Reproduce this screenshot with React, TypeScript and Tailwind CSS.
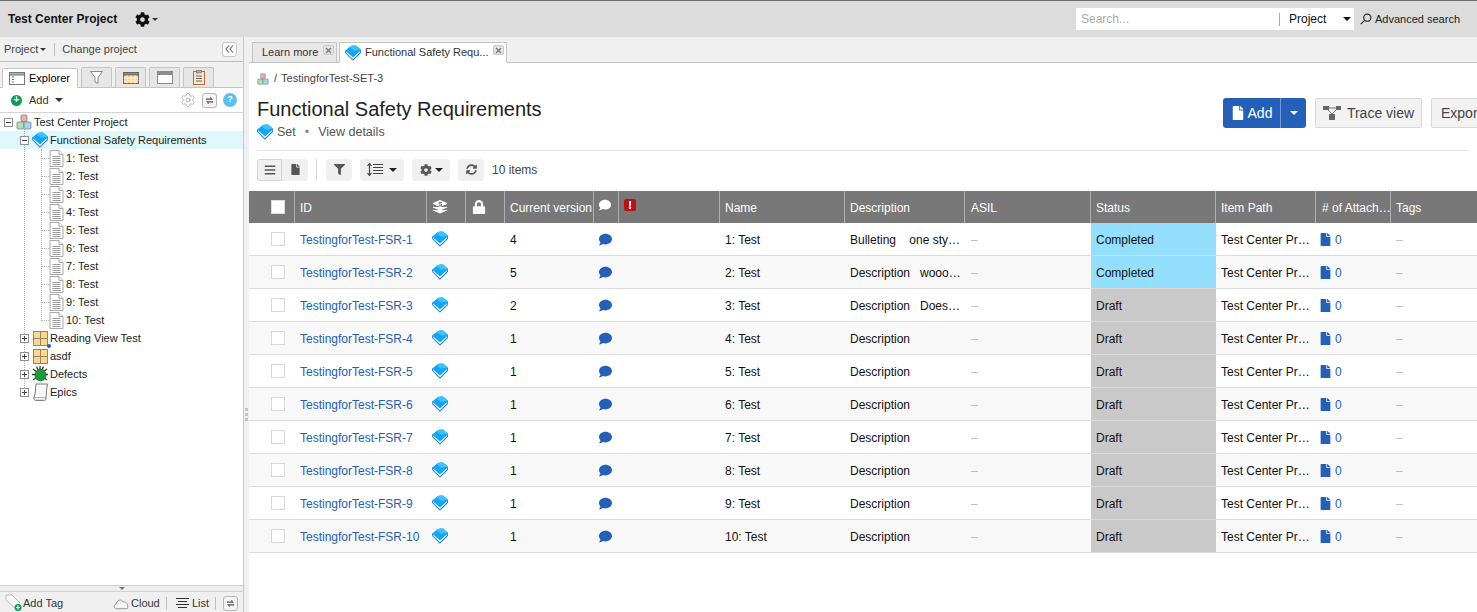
import { FaBars, FaCog, FaComment, FaExclamation, FaFile, FaFilter, FaLock, FaSyncAlt } from "react-icons/fa";
import { Settings } from "lucide-react";

const rows = [
  { id: 1, version: 4, desc: "Bulleting    one sty…", status: "Completed" },
  { id: 2, version: 5, desc: "Description   wooo…", status: "Completed" },
  { id: 3, version: 2, desc: "Description   Does…", status: "Draft" },
  { id: 4, version: 1, desc: "Description", status: "Draft" },
  { id: 5, version: 1, desc: "Description", status: "Draft" },
  { id: 6, version: 1, desc: "Description", status: "Draft" },
  { id: 7, version: 1, desc: "Description", status: "Draft" },
  { id: 8, version: 1, desc: "Description", status: "Draft" },
  { id: 9, version: 1, desc: "Description", status: "Draft" },
  { id: 10, version: 1, desc: "Description", status: "Draft" },
];

const gridCols =
  "grid grid-cols-[46px_132px_39px_39px_89px_25px_101px_125px_120px_126px_125px_100px_75px_86px]";

const Caret = ({ className = "border-t-black" }: { className?: string }) => (
  <span className={`inline-block w-0 h-0 border-x-[4px] border-x-transparent border-t-[4px] ${className}`} />
);

const Gem = ({ size = 16 }: { size?: number }) => (
  <svg width={size} height={size} viewBox="0 0 16 16" className="shrink-0">
    <path d="M0.1 5.8 V8 L8 15.8 L15.9 8 V5 L8 1 Z" fill="#1f7fe6" />
    <path d="M1.1 6.4 V7.7 L8 14.3 L14.9 7.5 V5 L8 1 Z" fill="#ffffff" />
    <path d="M0.2 5.8 L4.5 1.9 Q6 .7 8 .4 L11 .4 L15.8 4.6 V5.4 L8 12.6 Z" fill="#12a6fb" />
    <path d="M4.5 1.9 Q6 .7 8 .4 L11 .4 L15.8 4.6 L9 5.8 Z" fill="#3cc2fd" />
  </svg>
);

const ProjectIcon = ({ size = 16 }: { size?: number }) => (
  <svg width={size} height={size} viewBox="0 0 16 16" className="shrink-0">
    <rect x="5" y="1" width="6" height="6.5" rx="1" fill="#eab0a8" stroke="#8a7d78" strokeWidth="0.8" />
    <rect x="1" y="8" width="7" height="7" rx="1" fill="#b7dcbc" stroke="#74877a" strokeWidth="0.8" />
    <rect x="8" y="8" width="7" height="7" rx="1" fill="#a8d4f0" stroke="#6c8598" strokeWidth="0.8" />
  </svg>
);

const DocIcon = () => (
  <svg width="15" height="17" viewBox="0 0 15 17" className="shrink-0">
    <path d="M1 .5 H10 L14 4.5 V16.5 H1 Z" fill="#fff" stroke="#a8a8a8" />
    <path d="M10 .5 V4.5 H14" fill="#f0f0f0" stroke="#a8a8a8" />
    <path d="M3.5 6.5 H11.5 M3.5 8.5 H11.5 M3.5 10.5 H11.5 M3.5 12.5 H11.5 M3.5 14.5 H11.5" stroke="#9a9a9a" />
  </svg>
);

const FolderGrid = ({ dot }: { dot?: boolean }) => (
  <span className="relative shrink-0">
    <svg width="15" height="15" viewBox="0 0 15 15" className="block">
      <rect x=".5" y=".5" width="14" height="14" fill="#fcd98a" stroke="#94866a" />
      <path d="M7.5 .5 V14.5 M.5 7.5 H14.5" stroke="#94866a" />
    </svg>
    {dot && <span className="absolute right-[-3px] bottom-[-2px] w-[4px] h-[4px] rounded-full bg-[#2563bd]" />}
  </span>
);

const BugIcon = () => (
  <svg width="16" height="17" viewBox="0 0 16 17" className="shrink-0">
    <path
      d="M1 3 L5 6 M15 3 L11 6 M0 8.5 H4 M16 8.5 H12 M1 14 L5 11 M15 14 L11 11 M8 0 V3 M4.5 .5 L6 4 M11.5 .5 L10 4"
      stroke="#2f4a36"
      strokeWidth="1.3"
    />
    <ellipse cx="8.5" cy="9" rx="5.5" ry="6" fill="#1c9a3a" stroke="#24552f" strokeWidth=".7" />
  </svg>
);

const ScrollIcon = () => (
  <svg width="15" height="18" viewBox="0 0 15 18" className="shrink-0">
    <path d="M3 1 H14.5 C13.5 5 13.5 10 13 15 H.8 C2.5 11 2.5 5 3 1 Z" fill="#f8f8f8" stroke="#777" />
    <path d="M.8 15 C.8 16.8 1.8 17.4 3 17.4 H11.5 C12.5 17.4 13 16.5 13 15" fill="#eeeeee" stroke="#777" />
  </svg>
);

const Expander = ({ open }: { open?: boolean }) => (
  <span className="relative z-10 flex items-center justify-center w-[9px] h-[9px] border border-[#8f8f8f] bg-white shrink-0">
    <span className="absolute w-[5px] h-px bg-[#444]" />
    {!open && <span className="absolute w-px h-[5px] bg-[#444]" />}
  </span>
);

const ExpandRow = ({ label, children }: { label: string; children: React.ReactNode }) => (
  <div className="h-[18px] flex items-center pl-[20px]">
    <Expander />
    <span className="w-[3px]" />
    <span className="flex items-center justify-center w-[16px]">{children}</span>
    <span className="ml-[2px]">{label}</span>
  </div>
);

const SmallRefresh = () => (
  <span className="flex items-center justify-center w-[15px] h-[15px] shrink-0 border border-[#b5b5b5] rounded-[3px] bg-[#f4f4f4]">
    <svg width="9" height="9" viewBox="0 0 10 10">
      <path d="M1 3.5 H7.5 L6 1.5 M9 6.5 H2.5 L4 8.5" fill="none" stroke="#555" strokeWidth="1.2" />
    </svg>
  </span>
);

const Sidebar = () => (
  <aside className="w-[244px] shrink-0 h-full flex flex-col border-r border-[#c8c8c8] bg-white text-[11px] text-[#222]">
    <div className="h-[25px] bg-[#f0f0f0] border-b border-[#bfbfbf] flex items-center pl-[4px] pr-[6px] text-[#444]">
      <span>Project</span>
      <Caret className="border-t-[#333] ml-[2px] mt-[1px] !border-x-[3.5px] !border-t-[3.5px]" />
      <span className="w-px h-[13px] bg-[#bdbdbd] ml-[8px] mr-[7px]" />
      <span>Change project</span>
      <span className="ml-auto w-[15px] h-[15px] border border-[#c4c4c4] rounded-[3px] bg-white flex items-center justify-center text-[#666]">
        <svg width="9" height="8" viewBox="0 0 9 8">
          <path d="M4 .5 L1 4 L4 7.5 M8 .5 L5 4 L8 7.5" fill="none" stroke="#666" strokeWidth="1.1" />
        </svg>
      </span>
    </div>
    <div className="h-[26px] bg-[#f0f0f0] border-b border-[#c4c4c4] flex items-end pl-[2px] gap-[3px]">
      <div className="h-[20px] w-[76px] -mb-px bg-white border border-[#c4c4c4] border-b-white rounded-t-[2px] flex items-center pl-[6px] gap-[4px] text-[11px] text-black">
        <svg width="16" height="13" viewBox="0 0 16 13">
          <rect x=".5" y=".5" width="15" height="12" fill="#fff" stroke="#777" />
          <rect x=".5" y=".5" width="15" height="2.5" fill="#9fb4cc" stroke="#777" />
          <path d="M3 5 H5 M3 7.5 H5 M3 10 H5" stroke="#4a78b0" />
        </svg>
        Explorer
      </div>
      <div className="h-[20px] w-[31px] bg-[#e6e6e6] border border-[#c4c4c4] border-b-0 rounded-t-[2px] flex items-center justify-center">
        <svg width="13" height="13" viewBox="0 0 13 13">
          <path d="M.5 .5 H12.5 L8 6.5 V12.5 L5 11 V6.5 Z" fill="#fff" stroke="#8a8a8a" />
        </svg>
      </div>
      <div className="h-[20px] w-[31px] bg-[#e6e6e6] border border-[#c4c4c4] border-b-0 rounded-t-[2px] flex items-center justify-center">
        <svg width="16" height="12" viewBox="0 0 16 12">
          <rect x=".5" y=".5" width="15" height="11" fill="#fbd38a" stroke="#666" />
          <rect x=".5" y=".5" width="15" height="2.5" fill="#888" stroke="#666" />
          <path d="M.5 6 H15.5 M.5 9 H15.5 M4 3 V11.5 M8 3 V11.5 M12 3 V11.5" stroke="#fff" strokeWidth=".7" />
        </svg>
      </div>
      <div className="h-[20px] w-[31px] bg-[#e6e6e6] border border-[#c4c4c4] border-b-0 rounded-t-[2px] flex items-center justify-center">
        <svg width="16" height="13" viewBox="0 0 16 13">
          <rect x=".5" y=".5" width="15" height="12" fill="#fff" stroke="#888" />
          <rect x=".5" y=".5" width="15" height="3.5" fill="#8c8c8c" />
        </svg>
      </div>
      <div className="h-[20px] w-[31px] bg-[#e6e6e6] border border-[#c4c4c4] border-b-0 rounded-t-[2px] flex items-center justify-center">
        <svg width="12" height="15" viewBox="0 0 12 15">
          <rect x=".5" y="1.5" width="11" height="13" fill="#fde9d0" stroke="#b5703a" />
          <rect x="3.5" y=".5" width="5" height="2.5" fill="#aaa" stroke="#666" strokeWidth=".6" />
          <path d="M3 6 H9 M3 8.5 H9 M3 11 H9" stroke="#666" />
        </svg>
      </div>
    </div>
    <div className="h-[25px] border-b border-[#d4d4d4] flex items-center pl-[11px] pr-[6px] text-[#333]">
      <span className="flex items-center justify-center w-[11px] h-[11px] rounded-full bg-[#0f9a5a] text-white text-[10px] font-bold leading-none">
        +
      </span>
      <span className="ml-[7px]">Add</span>
      <Caret className="border-t-[#333] ml-[6px]" />
      <span className="ml-auto flex items-center gap-[6px]">
        <Settings size={16} strokeWidth={1} className="text-[#8f8f8f]" />
        <SmallRefresh />
        <span className="flex items-center justify-center w-[14px] h-[14px] rounded-full bg-[#5bc0f0] text-white text-[9px] font-bold">
          ?
        </span>
      </span>
    </div>
    <div className="relative flex-1">
      <span className="absolute left-[24px] top-[15px] h-[264px] border-l border-dotted border-[#b0b0b0]" />
      <span className="absolute left-[41px] top-[36px] h-[172px] border-l border-dotted border-[#b0b0b0]" />
      <div className="h-[18px] flex items-center pl-[4px]">
        <Expander open />
        <span className="w-[3px]" />
        <ProjectIcon />
        <span className="ml-[2px]">Test Center Project</span>
      </div>
      <div className="h-[18px] flex items-center pl-[20px] bg-[#e0f7fd]">
        <Expander open />
        <span className="w-[3px]" />
        <Gem />
        <span className="ml-[2px]">Functional Safety Requirements</span>
      </div>
      {rows.map((r) => (
        <div key={r.id} className="h-[18px] flex items-center pl-[41px]">
          <span className="w-[8px] border-t border-dotted border-[#b0b0b0]" />
          <DocIcon />
          <span className="ml-[2px]">{r.id}: Test</span>
        </div>
      ))}
      <ExpandRow label="Reading View Test">
        <FolderGrid dot />
      </ExpandRow>
      <ExpandRow label="asdf">
        <FolderGrid />
      </ExpandRow>
      <ExpandRow label="Defects">
        <BugIcon />
      </ExpandRow>
      <ExpandRow label="Epics">
        <ScrollIcon />
      </ExpandRow>
    </div>
    <div className="h-[7px] bg-[#efefef] border-y border-[#d0d0d0] flex items-center justify-center">
      <Caret className="border-t-[#777] !border-x-[3px] !border-t-[3px]" />
    </div>
    <div className="h-[20px] pt-[3px] bg-[#f0f0f0] flex items-center pl-[5px] text-[#333] whitespace-nowrap">
      <svg width="18" height="17" viewBox="0 0 18 17" className="shrink-0 -mt-[3px]">
        <path d="M1 1 H7 L15 9 L10 14 L1 6 Z" fill="#f6f6f6" stroke="#bdbdbd" />
        <circle cx="13" cy="13.5" r="3.5" fill="#0f9a5a" />
        <path d="M11 13.5 H15 M13 11.5 V15.5" stroke="#fff" strokeWidth="1.2" />
      </svg>
      <span className="w-[40px] shrink-0">Add Tag</span>
      <svg width="17" height="12" viewBox="0 0 18 12" className="ml-[50px] shrink-0">
        <path d="M4 11 C1 11 0 7 3 6.5 C4 2 9 0 11 4 C14 3 17 7 15 11 Z" fill="#f4f4f4" stroke="#8f8f8f" />
      </svg>
      <span className="ml-[1px] w-[30px] shrink-0">Cloud</span>
      <span className="w-px h-[13px] bg-[#bdbdbd] ml-[5px] mr-[9px] shrink-0" />
      <svg width="13" height="11" viewBox="0 0 13 11" className="shrink-0">
        <path d="M0 .5 H13 M2 3.5 H11 M0 6.5 H13 M2 9.5 H11" stroke="#333" />
      </svg>
      <span className="ml-[3px]">List</span>
      <span className="w-px h-[13px] bg-[#bdbdbd] ml-[6px] mr-[7px] shrink-0" />
      <SmallRefresh />
    </div>
  </aside>
);

const Toolbtn = ({ children, className = "" }: { children: React.ReactNode; className?: string }) => (
  <span
    className={`h-[22px] flex items-center justify-center gap-[3px] rounded-[3px] bg-[#f0f0f0] text-[#555] ${className}`}
  >
    {children}
  </span>
);

const TabClose = () => (
  <span className="absolute right-[2px] top-[2px] w-[11px] h-[10px] rounded-[2px] border border-[#c8c8c8] bg-[#e4e4e4] flex items-center justify-center">
    <svg width="7" height="7" viewBox="0 0 7 7">
      <path d="M1 1 L6 6 M6 1 L1 6" stroke="#777" strokeWidth="1.4" />
    </svg>
  </span>
);

const Th = ({ children, className = "" }: { children?: React.ReactNode; className?: string }) => (
  <div
    className={`h-[32px] bg-[#787878] border-r border-[#b0b0b0] text-white text-[12px] flex items-center pl-[5px] whitespace-nowrap overflow-hidden ${className}`}
  >
    {children}
  </div>
);

const Td = ({ children, className = "" }: { children?: React.ReactNode; className?: string }) => (
  <div className={`flex items-center pl-[5px] pt-[2px] whitespace-nowrap overflow-hidden ${className}`}>{children}</div>
);

const Dash = () => <span className="text-[#bbb]">–</span>;

const Table = () => (
  <div className="mt-[10px] w-[1228px] text-[12px] text-[#111]">
    <div className={gridCols}>
      <Th className="justify-center !pl-[12px]">
        <span className="w-[14px] h-[14px] bg-white border border-[#ddd]" />
      </Th>
      <Th className="pt-[2px]">ID</Th>
      <Th className="!pl-[5px]">
        <svg width="16" height="14" viewBox="0 0 16 14">
          <path d="M8 .5 L15 3.5 L8 6.5 L1 3.5 Z M1 7 L8 10 L15 7 M1 10 L8 13 L15 10" fill="#fff" stroke="#fff" strokeWidth="1" />
          <path d="M10 2.4 H7 V4 H9.5 V5.8 H6.5" fill="none" stroke="#787878" strokeWidth="1" />
        </svg>
      </Th>
      <Th className="!pl-[6px]">
        <FaLock className="text-white text-[14px]" />
      </Th>
      <Th className="pt-[2px]">Current version</Th>
      <Th className="!pl-[5px] items-start pt-[8px]">
        <FaComment className="text-white text-[12px]" />
      </Th>
      <Th className="!pl-[5px] items-start pt-[8px]">
        <span className="w-[12px] h-[12px] rounded-[2px] bg-[#c00f12] flex items-center justify-center">
          <FaExclamation className="text-white text-[8px]" />
        </span>
      </Th>
      <Th className="pt-[2px]">Name</Th>
      <Th className="pt-[2px]">Description</Th>
      <Th className="pt-[2px] !pl-[6px]">ASIL</Th>
      <Th className="pt-[2px]">Status</Th>
      <Th className="pt-[2px]">Item Path</Th>
      <Th className="pt-[2px] !pl-[6px]">{"# of Attach…"}</Th>
      <Th className="pt-[2px] border-r-0">Tags</Th>
    </div>
    {rows.map((r, i) => (
      <div
        key={r.id}
        className={`${gridCols} h-[33px] border-b border-[#dcdcdc] ${i % 2 === 1 ? "bg-[#f8f8f8]" : "bg-white"}`}
      >
        <Td className="justify-center !pl-[12px] !pt-0">
          <span className="w-[14px] h-[14px] bg-white border border-[#d8d8d8]" />
        </Td>
        <Td className="text-[#2460b8]">TestingforTest-FSR-{r.id}</Td>
        <Td className="!pt-0">
          <Gem />
        </Td>
        <Td />
        <Td>{r.version}</Td>
        <Td className="!pt-0">
          <FaComment className="text-[#2460b8] text-[13px]" />
        </Td>
        <Td />
        <Td>{r.id}: Test</Td>
        <Td className="whitespace-pre">{r.desc}</Td>
        <Td className="!pl-[6px]">
          <Dash />
        </Td>
        <Td className={r.status === "Completed" ? "bg-[#93dffd]" : "bg-[#c9c9c9]"}>{r.status}</Td>
        <Td>Test Center Pr…</Td>
        <Td className="text-[#2460b8] gap-[3px]">
          <FaFile className="text-[13px] mb-[2px] -ml-[2px]" />0
        </Td>
        <Td>
          <Dash />
        </Td>
      </div>
    ))}
  </div>
);

const Main = () => (
  <main className="relative flex-1 min-w-0 h-full flex flex-col pl-[5px] bg-[#f0f0f0]">
    <span className="absolute left-[1px] top-[371px] flex flex-col gap-[2px]">
      <span className="w-[3px] h-[3px] bg-[#c4c4c4]" />
      <span className="w-[3px] h-[3px] bg-[#c4c4c4]" />
      <span className="w-[3px] h-[3px] bg-[#c4c4c4]" />
    </span>
    <div className="h-[26px] shrink-0 border-b border-[#c4c4c4] flex items-end pl-[3px] gap-[2px] text-[11px] text-[#333]">
      <div className="w-[85px] h-[21px] -mb-px bg-[#e8e8e8] border border-[#c4c4c4] flex items-center pl-[9px] relative">
        Learn more
        <TabClose />
      </div>
      <div className="w-[168px] h-[21px] -mb-px bg-white border border-[#c4c4c4] border-b-white flex items-center pl-[5px] gap-[4px] relative">
        <Gem />
        Functional Safety Requ...
        <TabClose />
      </div>
    </div>
    <div className="flex-1 min-h-0 bg-white overflow-hidden">
      <div className="pl-[8px]">
        <div className="h-[31px] flex items-center text-[11px] text-[#444]">
          <ProjectIcon size={12} />
          <span className="ml-[5px]">/</span>
          <span className="ml-[4px]">TestingforTest-SET-3</span>
        </div>
        <div className="flex items-start justify-between">
          <div className="pt-[2px]">
            <h1 className="text-[20px] leading-[26px] text-[#222] font-normal">Functional Safety Requirements</h1>
            <div className="mt-[1px] h-[18px] flex items-center text-[12.5px] text-[#555]">
              <Gem />
              <span className="ml-[4px]">Set</span>
              <span className="mx-[9px] text-[#888]">•</span>
              <span>View details</span>
            </div>
          </div>
          <div className="flex items-center gap-[9px] mt-[4px] shrink-0 w-[254px] overflow-hidden text-[14px]">
            <div className="flex h-[30px] shrink-0 rounded-[3px] bg-[#2460b8] text-white">
              <span className="w-[58px] flex items-center justify-center gap-[3px] border-r border-[#6f9ad8]">
                <FaFile className="text-[14px]" />
                Add
              </span>
              <span className="w-[25px] flex items-center justify-center">
                <Caret className="border-t-white" />
              </span>
            </div>
            <div className="h-[30px] w-[107px] shrink-0 rounded-[2px] bg-[#f2f2f2] border border-[#d8d8d8] text-[#444] flex items-center justify-center gap-[6px]">
              <svg width="18" height="14" viewBox="0 0 18 14">
                <path d="M4 2 H14 M4 3 L9 8 M14 3 L9 8" stroke="#777" fill="none" />
                <rect x="0" y="0" width="6" height="4" fill="#666" />
                <rect x="13" y="0" width="5" height="4" fill="#666" />
                <rect x="6" y="8" width="6" height="6" fill="#666" />
              </svg>
              Trace view
            </div>
            <div className="h-[30px] w-[60px] shrink-0 rounded-[2px] bg-[#f2f2f2] border border-[#d8d8d8] text-[#444] flex items-center pl-[9px]">
              Export
            </div>
          </div>
        </div>
      </div>
      <div className="mx-[8px] mt-[9px] border-t border-[#e4e4e4]" />
      <div className="pl-[8px] mt-[7px] h-[23px] flex items-center text-[12px] text-[#444]">
        <Toolbtn className="w-[25px] bg-[#e2e2e2] border border-[#d4d4d4] rounded-r-none">
          <FaBars className="text-[12px]" />
        </Toolbtn>
        <Toolbtn className="w-[26px] rounded-l-none">
          <FaFile className="text-[11px]" />
        </Toolbtn>
        <span className="w-px h-[22px] bg-[#d8d8d8] ml-[8px] mr-[9px]" />
        <Toolbtn className="w-[26px]">
          <FaFilter className="text-[11px]" />
        </Toolbtn>
        <Toolbtn className="w-[44px] ml-[8px]">
          <svg width="16" height="13" viewBox="0 0 16 13">
            <path d="M2.5 1 V12 M.5 3 L2.5 .5 L4.5 3 M.5 10 L2.5 12.5 L4.5 10 M6 1.5 H16 M6 4.5 H16 M6 7.5 H16 M6 10.5 H16" fill="none" stroke="#444" strokeWidth="1.2" />
          </svg>
          <Caret className="border-t-[#222] ml-[3px]" />
        </Toolbtn>
        <Toolbtn className="w-[38px] ml-[8px]">
          <FaCog className="text-[12px]" />
          <Caret className="border-t-[#222]" />
        </Toolbtn>
        <Toolbtn className="w-[26px] ml-[8px]">
          <FaSyncAlt className="text-[11px]" />
        </Toolbtn>
        <span className="ml-[8px]">10 items</span>
      </div>
      <Table />
    </div>
  </main>
);

export default function App() {
  return (
    <div className="w-[1477px] h-[612px] overflow-hidden flex flex-col bg-white font-['Liberation_Sans',Arial,sans-serif]">
      <header className="h-[37px] shrink-0 border-t border-[#6e6e6e] bg-[#dcdcdc] flex items-center pl-[8px] pr-[17px]">
        <span className="text-[12px] font-bold text-[#111]">Test Center Project</span>
        <FaCog className="ml-[18px] text-[15px] text-[#111]" />
        <Caret className="border-t-[#333] ml-[2px] !border-x-[3px] !border-t-[3px]" />
        <div className="ml-auto w-[278px] h-[22px] bg-white flex items-center pl-[5px] text-[12px]">
          <span className="w-[198px] text-[#aaa]">Search...</span>
          <span className="w-px h-[13px] bg-[#aaa]" />
          <span className="ml-[9px] text-[#111]">Project</span>
          <Caret className="border-t-[#111] ml-[17px]" />
        </div>
        <svg width="12" height="12" viewBox="0 0 12 12" className="ml-[6px]">
          <circle cx="7.3" cy="4.7" r="3.6" fill="none" stroke="#222" strokeWidth="1.1" />
          <path d="M4.6 7.4 L.8 11.2" stroke="#222" strokeWidth="1.2" />
        </svg>
        <span className="ml-[3px] text-[11px] text-[#222]">Advanced search</span>
      </header>
      <div className="flex-1 min-h-0 flex">
        <Sidebar />
        <Main />
      </div>
    </div>
  );
}
